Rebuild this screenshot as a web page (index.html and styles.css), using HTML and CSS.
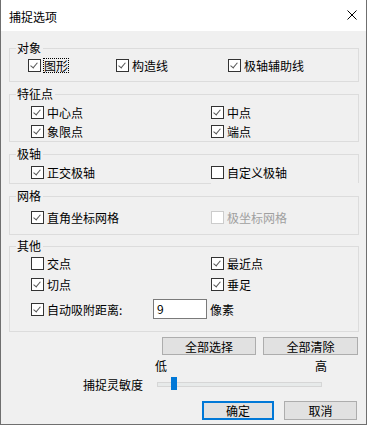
FILE: index.html
```html
<!DOCTYPE html>
<html lang="zh-CN">
<head>
    <meta charset="UTF-8">
    <title>捕捉选项</title>
    <link rel="stylesheet" href="styles.css">
</head>
<body>
    <div class="dialog">
        <div class="titlebar">
            <span class="title">捕捉选项</span>
            <svg class="close" width="10" height="10" viewBox="0 0 10 10">
                <path d="M0.5 0.5 L9.5 9.5 M9.5 0.5 L0.5 9.5" stroke="#000" stroke-width="1" fill="none"/>
            </svg>
        </div>
        <div class="content">
            <fieldset class="group group-object">
                <legend>对象</legend>
                <div class="rows cols-3">
                    <div class="check on"><span class="box"></span><span class="label focus">图形</span></div>
                    <div class="check on"><span class="box"></span><span class="label">构造线</span></div>
                    <div class="check on"><span class="box"></span><span class="label">极轴辅助线</span></div>
                </div>
            </fieldset>

            <fieldset class="group group-points">
                <legend>特征点</legend>
                <div class="rows cols-2">
                    <div class="check on"><span class="box"></span><span class="label">中心点</span></div>
                    <div class="check on"><span class="box"></span><span class="label">中点</span></div>
                    <div class="check on"><span class="box"></span><span class="label">象限点</span></div>
                    <div class="check on"><span class="box"></span><span class="label">端点</span></div>
                </div>
            </fieldset>

            <fieldset class="group group-polar">
                <legend>极轴</legend>
                <div class="rows cols-2">
                    <div class="check on"><span class="box"></span><span class="label">正交极轴</span></div>
                    <div class="check"><span class="box"></span><span class="label">自定义极轴</span></div>
                </div>
            </fieldset>

            <fieldset class="group group-grid">
                <legend>网格</legend>
                <div class="rows cols-2">
                    <div class="check on"><span class="box"></span><span class="label">直角坐标网格</span></div>
                    <div class="check disabled"><span class="box"></span><span class="label">极坐标网格</span></div>
                </div>
            </fieldset>

            <fieldset class="group group-other">
                <legend>其他</legend>
                <div class="rows cols-2">
                    <div class="check"><span class="box"></span><span class="label">交点</span></div>
                    <div class="check on"><span class="box"></span><span class="label">最近点</span></div>
                    <div class="check on"><span class="box"></span><span class="label">切点</span></div>
                    <div class="check on"><span class="box"></span><span class="label">垂足</span></div>
                    <div class="distance-row">
                        <div class="check on distance-check"><span class="box"></span><span class="label">自动吸附距离:</span></div>
                        <div class="textbox">9</div>
                        <span class="unit">像素</span>
                    </div>
                </div>
            </fieldset>

            <div class="select-buttons">
                <div class="btn btn-wide">全部选择</div>
                <div class="btn btn-wide2">全部清除</div>
            </div>

            <div class="scale-labels">
                <span class="low">低</span>
                <span class="high">高</span>
            </div>

            <div class="slider-row">
                <span class="slider-label">捕捉灵敏度</span>
                <div class="track">
                    <div class="thumb"></div>
                </div>
            </div>

            <div class="dialog-buttons">
                <div class="btn btn-ok">确定</div>
                <div class="btn btn-cancel">取消</div>
            </div>
        </div>
    </div>
</body>
</html>
```

FILE: styles.css
```css
body {
    margin: 0;
    padding: 0;
    background: #f0f0f0;
    font-family: "Noto Sans CJK SC", "Noto Sans", sans-serif;
    font-size: 12px;
    color: #000;
}
.dialog {
    width: 367px;
    height: 425px;
    box-sizing: border-box;
    border: 1px solid #6f6f6f;
    border-top: none;
    background: #f0f0f0;
    display: flex;
    flex-direction: column;
}
.titlebar {
    height: 31px;
    background: #fff;
    display: flex;
    align-items: center;
    padding-left: 8px;
    padding-right: 9px;
    justify-content: space-between;
    flex-shrink: 0;
}
.title {
    line-height: 13px;
    margin-top: 1px;
}
.close {
    margin-top: -1px;
}
.content {
    padding: 10px 7px 0 8px;
    display: flex;
    flex-direction: column;
}

/* group boxes */
.group {
    margin: 0 0 5px 0;
    padding: 0;
    border: 1px solid #dcdcdc;
    min-width: 0;
    position: relative;
}
.group legend {
    padding: 0 2px 0 1px;
    margin-left: 6px;
    line-height: 14px;
    height: 14px;
}
.rows {
    display: grid;
    padding-left: 21px;
}
.cols-3 {
    grid-template-columns: 88px 112px auto;
    padding-left: 18px;
}
.cols-2 {
    grid-template-columns: 180px auto;
}
.group-object .rows { padding-top: 4px; padding-bottom: 9px; }
.group-points .rows { padding-top: 5px; padding-bottom: 3px; row-gap: 6px; }
.group-polar .rows { padding-top: 5px; padding-bottom: 4px; }
.group-grid .rows { padding-top: 8px; padding-bottom: 10px; }
.group-other .rows { padding-top: 4px; padding-bottom: 12px; row-gap: 8px; }
.group-other { margin-bottom: 0; }
.group-grid { margin-bottom: 4px; }

.group-polar::after {
    content: "";
    position: absolute;
    left: 201px;
    right: -1px;
    bottom: -1px;
    height: 1px;
    background: #f0f0f0;
}

/* checkboxes */
.check {
    display: flex;
    align-items: center;
    height: 13px;
}
.box {
    width: 13px;
    height: 13px;
    box-sizing: border-box;
    border: 1px solid #333;
    background: #fff;
    flex-shrink: 0;
    position: relative;
}
.check.on .box::after {
    content: "";
    position: absolute;
    left: 3px;
    top: 1px;
    width: 3px;
    height: 6px;
    border-right: 1px solid #555;
    border-bottom: 1px solid #555;
    transform: rotate(40deg);
    transform-origin: center;
}
.label {
    margin-left: 3px;
    line-height: 13px;
    white-space: nowrap;
}
.label.focus {
    outline: 1px dotted #000;
    outline-offset: 0;
}
.check.disabled .box {
    border-color: #cccccc;
}
.check.disabled .label {
    color: #a0a0a0;
}

.distance-row {
    grid-column: 1 / 3;
    display: flex;
    align-items: center;
    height: 20px;
}
.distance-check {
    width: 122px;
}
.textbox {
    width: 54px;
    height: 20px;
    box-sizing: border-box;
    border: 1px solid #7a7a7a;
    background: #fff;
    padding-left: 3px;
    line-height: 18px;
}
.unit {
    margin-left: 3px;
}

/* buttons */
.btn {
    box-sizing: border-box;
    background: #e1e1e1;
    border: 1px solid #adadad;
    display: flex;
    align-items: center;
    justify-content: center;
    line-height: 13px;
}
.select-buttons {
    display: flex;
    justify-content: flex-end;
    gap: 7px;
    padding-right: 1px;
    margin-top: 5px;
}
.btn-wide {
    width: 94px;
    height: 18px;
}
.btn-wide2 {
    width: 95px;
    height: 18px;
}
.scale-labels {
    display: flex;
    margin-top: 4px;
    padding-left: 146px;
    line-height: 13px;
    height: 13px;
}
.high {
    margin-left: 148px;
}
.slider-row {
    display: flex;
    align-items: center;
    margin-top: 6px;
    padding-left: 74px;
    height: 13px;
}
.slider-label {
    line-height: 13px;
    width: 74px;
}
.track {
    width: 165px;
    height: 5px;
    box-sizing: border-box;
    background: #e7eaea;
    border: 1px solid #d6d6d6;
    position: relative;
}
.thumb {
    position: absolute;
    left: 13px;
    top: -6px;
    width: 6px;
    height: 13px;
    background: #0078d7;
}
.dialog-buttons {
    display: flex;
    justify-content: flex-end;
    gap: 10px;
    margin-top: 10px;
    padding-right: 2px;
}
.btn-ok {
    width: 72px;
    height: 19px;
    border: 2px solid #0078d7;
}
.btn-cancel {
    width: 73px;
    height: 19px;
}
```
